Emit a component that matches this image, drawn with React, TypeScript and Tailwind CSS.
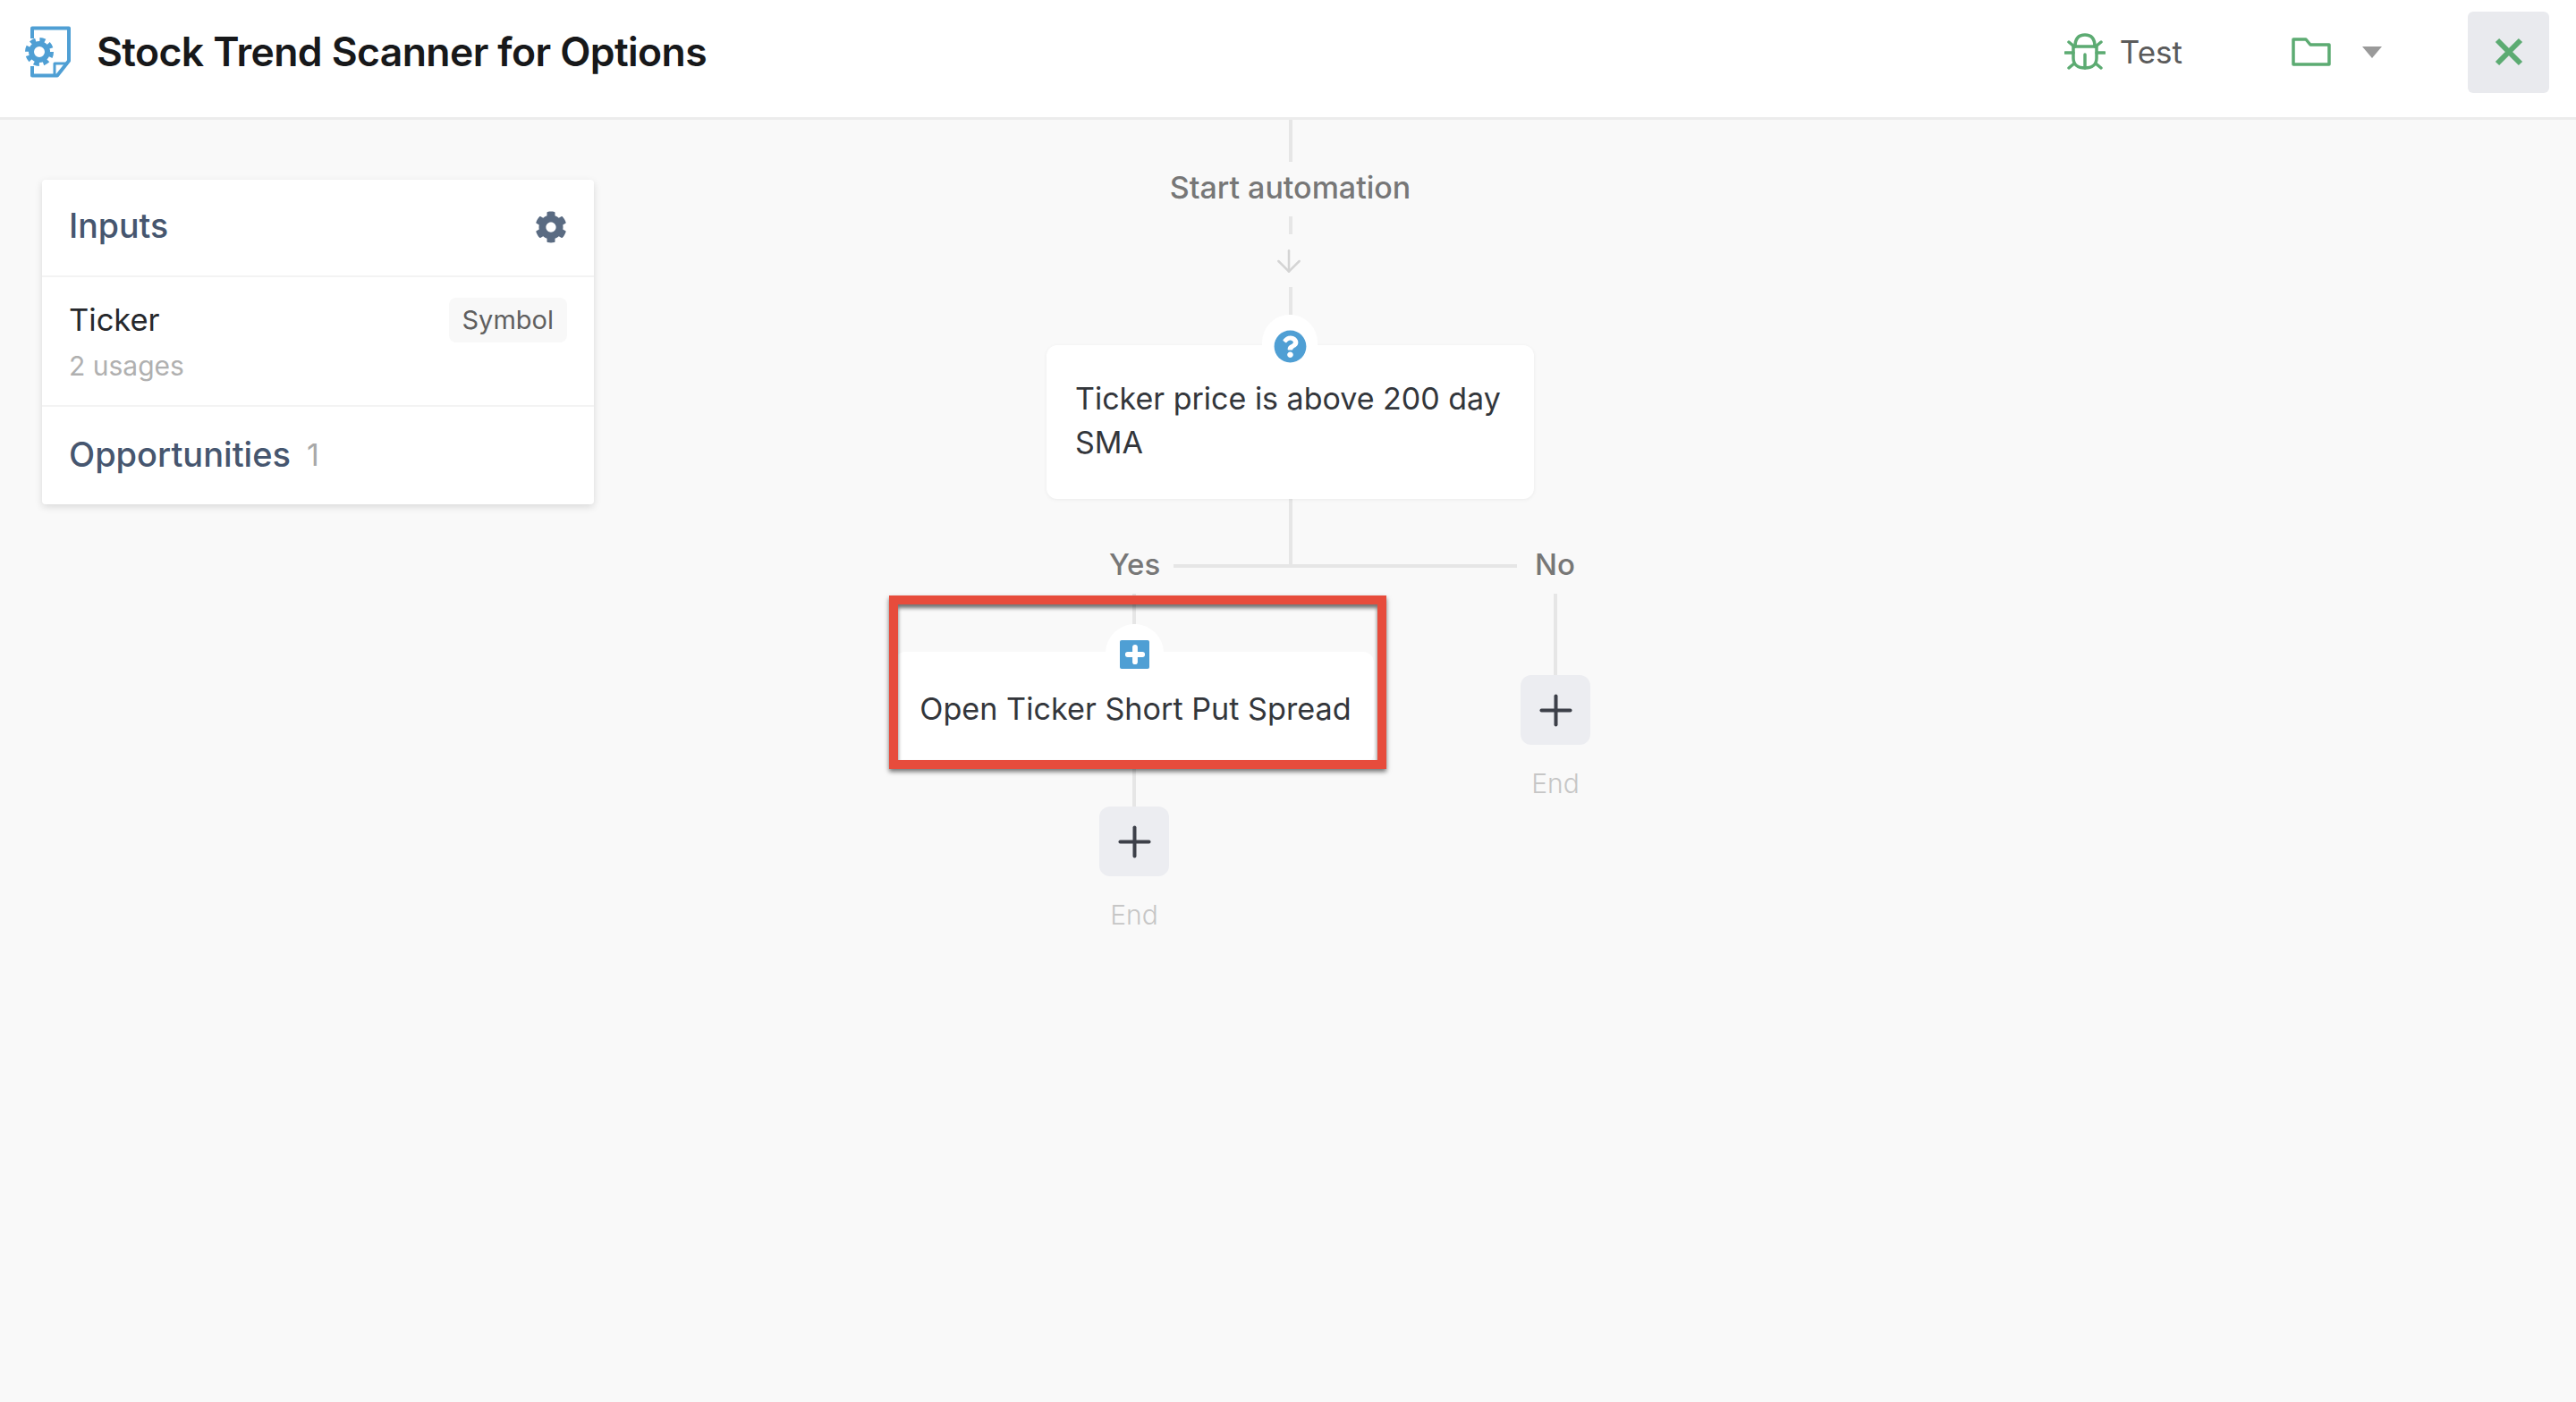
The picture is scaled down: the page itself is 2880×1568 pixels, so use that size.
import { ArrowDown, Plus } from 'lucide-react';
import { FaCog, FaQuestionCircle } from 'react-icons/fa';

const font = 'font-["Inter","Noto_Sans",sans-serif]';

function AppLogo() {
  return (
    <svg width="51" height="58" viewBox="0 0 51 58" fill="none" className="shrink-0">
      <path d="M8 14V2.5H49V39L36 55.5H8V45" stroke="#4f9fd4" strokeWidth="4" strokeLinejoin="round" />
      <path d="M33 55V42H48" stroke="#4f9fd4" strokeWidth="3" strokeLinejoin="round" />
      <circle cx="16" cy="29" r="9" stroke="#4f9fd4" strokeWidth="6" />
      <circle cx="16" cy="29" r="13.5" stroke="#4f9fd4" strokeWidth="5" strokeDasharray="6 4.6" />
    </svg>
  );
}

function BugIcon() {
  return (
    <svg width="46" height="42" viewBox="0 0 46 42" fill="none" stroke="#5cab72" strokeWidth="3.5" strokeLinecap="round" className="shrink-0">
      <path d="M12 15C12 6 16 2 23 2s11 4 11 13" />
      <path d="M10 15H36V28C36 35 31 39 23 39S10 35 10 28Z" />
      <path d="M23 39V24" />
      <path d="M1 22H10M36 22H45M5 10L11 15M41 10L35 15M5 39L11 34M41 39L35 34" />
    </svg>
  );
}

function FolderIcon() {
  return (
    <svg width="44" height="32" viewBox="0 0 44 32" fill="none" stroke="#5cab72" strokeWidth="3.5" strokeLinejoin="round" className="shrink-0">
      <path d="M2 2H16L21 8H42V30H2Z" />
    </svg>
  );
}

function AddEnd() {
  return (
    <div className="flex flex-col items-center">
      <div className="flex h-[78px] w-[78px] items-center justify-center rounded-xl bg-[#ecedf1]">
        <Plus className="h-[55px] w-[55px] shrink-0 text-[#3d4049]" strokeWidth={1.75} />
      </div>
      <span className="mt-[25px] text-[30px] font-light leading-[36px] text-[#c6c6c6]">End</span>
    </div>
  );
}

export default function App() {
  return (
    <div className={`flex h-[1568px] w-full flex-col overflow-hidden bg-[#f9f9f9] ${font}`}>
      <header className="flex h-[134px] shrink-0 items-center border-b-[3px] border-[#ececec] bg-white pb-[15px] pl-7 pr-[30px]">
        <AppLogo />
        <h1 className="ml-[29px] text-[44.5px] font-semibold tracking-[-0.6px] text-[#17181a]">Stock Trend Scanner for Options</h1>
        <div className="ml-auto flex items-center">
          <BugIcon />
          <span className="ml-[16px] text-[35px] text-[#5b5b5b]">Test</span>
          <div className="ml-[122px]">
            <FolderIcon />
          </div>
          <div className="ml-[35px] h-0 w-0 border-x-[11px] border-t-[13px] border-x-transparent border-t-[#9a9a9a]" />
          <button className="ml-[96px] flex h-[91px] w-[91px] items-center justify-center rounded-md bg-[#e9eaee]">
            <svg width="32" height="32" viewBox="0 0 32 32" stroke="#5cab72" strokeWidth="6">
              <path d="M3 3L29 29M29 3L3 29" />
            </svg>
          </button>
        </div>
      </header>

      <main className="flex flex-1 items-start">
        {/* inputs panel */}
        <section className="ml-[47px] mt-[67px] w-[617px] rounded-sm bg-white shadow-[0_3px_8px_rgba(0,0,0,0.13)]">
          <div className="flex h-[109px] items-center justify-between border-b-2 border-[#f3f3f3] pb-[2px] pl-[30px] pr-[30px]">
            <span className="text-[37.5px] font-medium text-[#46566f]">Inputs</span>
            <FaCog className="text-[36px] text-[#5a6b82]" />
          </div>
          <div className="h-[145px] border-b-2 border-[#f3f3f3] pl-[30px] pr-[30px] pt-[22px]">
            <div className="flex items-center justify-between">
              <span className="text-[34.5px] text-[#26282c]">Ticker</span>
              <span className="rounded-lg bg-[#f8f8f8] px-[15px] py-[3px] text-[29px] text-[#5f5f5f]">Symbol</span>
            </div>
            <div className="mt-[3px] text-[30px] text-[#b0b0b0]">2 usages</div>
          </div>
          <div className="flex h-[109px] items-center pb-[2px] pl-[30px]">
            <span className="text-[38px] font-medium text-[#46566f]">Opportunities</span>
            <span className="ml-[18px] text-[34px] text-[#a8a8a8]">1</span>
          </div>
        </section>

        {/* automation diagram */}
        <div className="ml-[330px] flex w-[786px] flex-col">
          <div className="ml-[176px] flex w-[545px] flex-col items-center">
            <div className="h-[47px] w-1 bg-[#e6e6e6]" />
            <div className="flex h-[61px] items-start pt-[5px] text-[34px] font-medium leading-[48px] text-[#777777]">Start automation</div>
            <div className="h-[20px] w-1 bg-[#e6e6e6]" />
            <div className="flex h-[59px] items-center pr-[3px]">
              <ArrowDown className="h-10 w-10 text-[#d4d4d4]" strokeWidth={1.5} />
            </div>
            <div className="h-[31px] w-1 bg-[#e6e6e6]" />
            <div className="h-[34px]" />

            <div className="relative h-[172px] w-full rounded-xl bg-white px-8 pt-[35px] text-[34px] leading-[49px] text-[#33363b] shadow-[0_1px_4px_rgba(0,0,0,0.06)]">
              <div className="absolute -top-[34px] left-[241px] flex h-[62px] w-[62px] justify-center rounded-t-full bg-white pt-[17px]">
                <FaQuestionCircle className="text-[37px] text-[#4f9fd4]" />
              </div>
              Ticker price is above 200 day SMA
            </div>

            <div className="h-[75px] w-1 bg-[#e6e6e6]" />
          </div>

          <div className="-mt-[20px] flex h-10 items-center pb-[2px] pl-[246px] text-[33px] font-medium text-[#777777]">
            <span className="w-[54px]">Yes</span>
            <div className="ml-[18px] mt-[2px] h-1 w-[384px] bg-[#e6e6e6]" />
            <span className="ml-[20px]">No</span>
          </div>

          <div className="mt-[11px] flex items-start">
            {/* yes branch */}
            <div className="relative flex w-[548px] flex-col items-center">
              <div className="h-[34px] w-1 bg-[#e6e6e6]" />
              <div className="h-[31px]" />
              <div className="relative flex h-[125px] w-[536px] justify-center rounded-xl bg-white pl-[3px] pt-[38px] text-[34.2px] text-[#33363b]">
                <div className="absolute -top-[31px] left-[236px] flex h-[64px] w-[65px] justify-center rounded-t-full bg-white pt-[18px]">
                  <div className="flex h-8 w-[33px] items-center justify-center rounded-[2px] bg-[#4f9fd4]">
                    <Plus className="h-7 w-7 shrink-0 text-white" strokeWidth={5} />
                  </div>
                </div>
                Open Ticker Short Put Spread
              </div>
              <div className="h-[48px] w-1 bg-[#e6e6e6]" />
              <AddEnd />

              {/* red annotation frame */}
              <div className="absolute left-0 top-[2px] z-10 h-[194px] w-[556px] border-[10px] border-[#e74c3c] shadow-[0_3px_5px_rgba(0,0,0,0.55),inset_0_4px_4px_rgba(0,0,0,0.55)]" />
            </div>

            {/* no branch */}
            <div className="ml-[158px] flex w-[78px] flex-col items-center">
              <div className="h-[91px] w-1 bg-[#e6e6e6]" />
              <AddEnd />
            </div>
          </div>
        </div>
      </main>
    </div>
  );
}
